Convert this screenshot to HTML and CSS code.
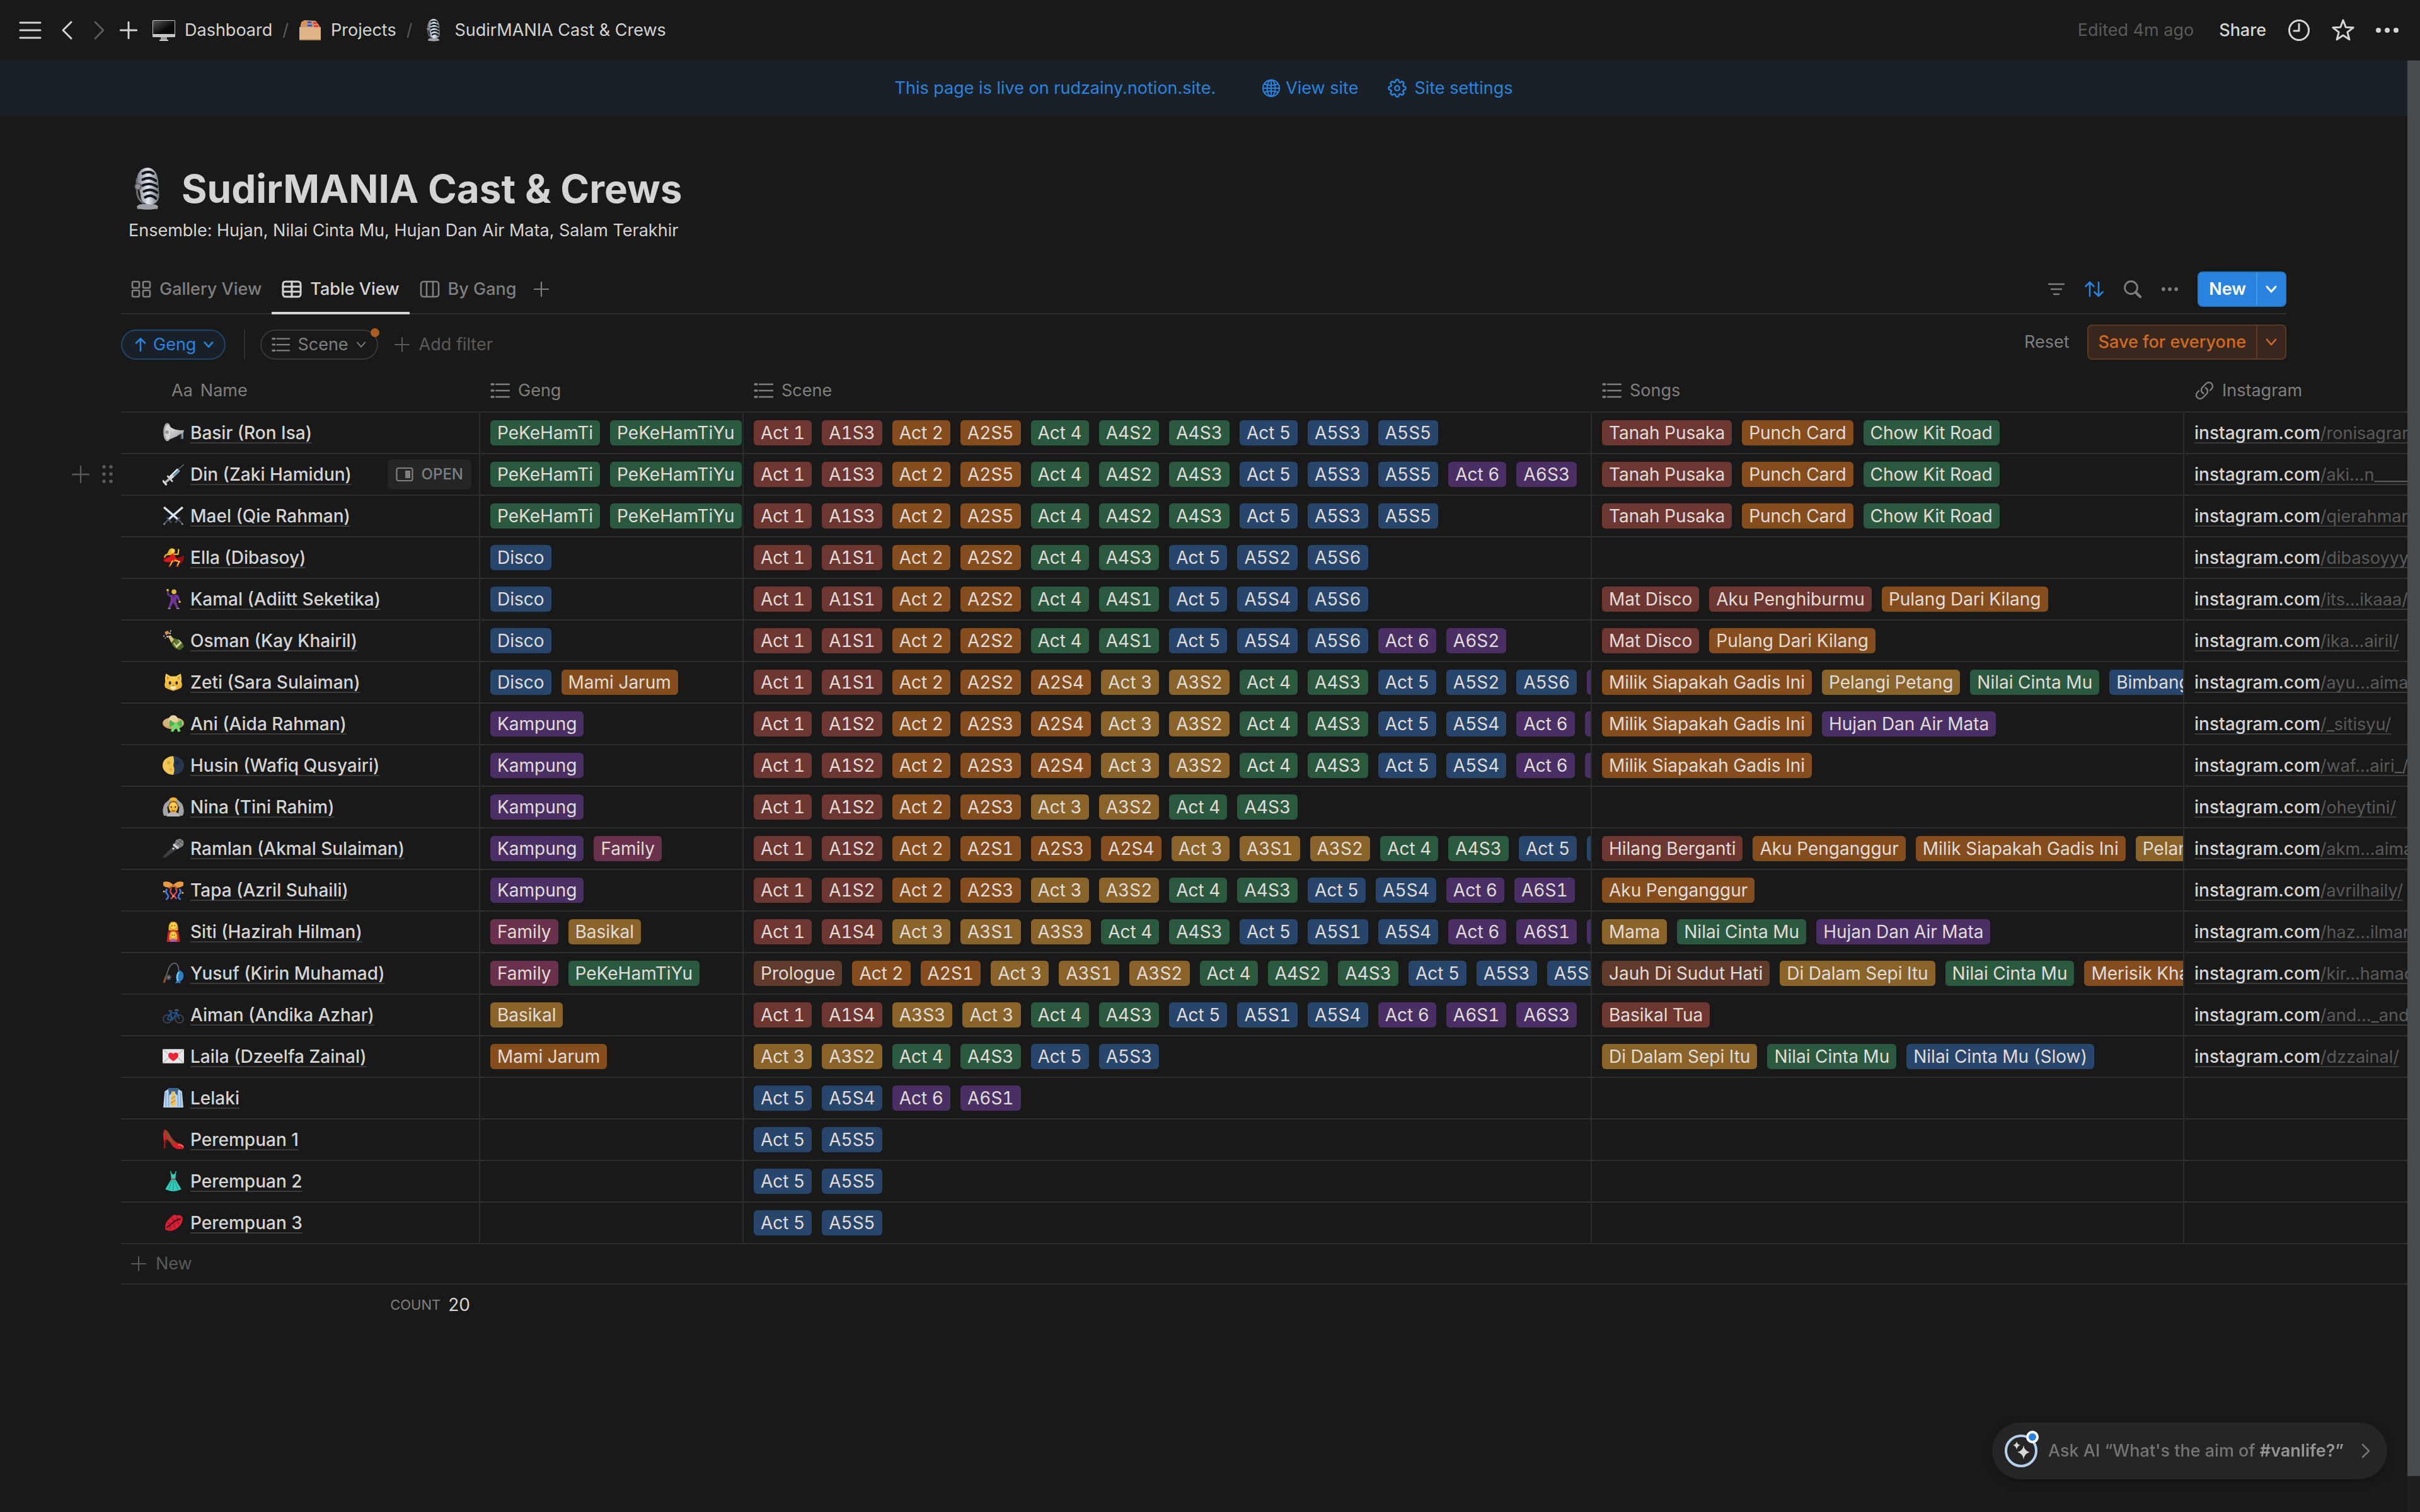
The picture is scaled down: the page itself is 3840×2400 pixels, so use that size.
FILE: index.html
```html
<!DOCTYPE html>
<html lang="en">
<head>
<meta charset="utf-8">
<title>SudirMANIA Cast &amp; Crews</title>
<link rel="stylesheet" href="styles.css">
</head>
<body>
<svg class="sprite" aria-hidden="true">
  <defs>
    <linearGradient id="steel" x1="0" x2="1"><stop offset="0" stop-color="#777b80"/><stop offset=".5" stop-color="#dfe9f5"/><stop offset="1" stop-color="#6a6a6c"/></linearGradient>
    <linearGradient id="silver" x1="0" x2="1" y1="0" y2="1"><stop offset="0" stop-color="#fff"/><stop offset="1" stop-color="#8d9094"/></linearGradient>
    <linearGradient id="screen" x1="0" x2="1" y1="0" y2="1"><stop offset="0" stop-color="#565656"/><stop offset=".6" stop-color="#0a0a0a"/></linearGradient>
    <linearGradient id="gold" x1="0" x2="0" y1="0" y2="1"><stop offset="0" stop-color="#ffd95e"/><stop offset="1" stop-color="#e8a72a"/></linearGradient>
    <symbol id="i-plus" viewBox="0 0 24 24"><path d="M12 1v22M1 12h22"/></symbol>
    <symbol id="i-down" viewBox="0 0 20 20"><path d="M3 6l7 8 7-8"/></symbol>
    <symbol id="i-list" viewBox="0 0 32 32"><path d="M9 6h21M9 16h21M9 26h21"/><path d="M2 6h3M2 16h3M2 26h3" stroke-width="3.4"/></symbol>
    <symbol id="i-dots" viewBox="0 0 36 36"><g fill="currentColor" stroke="none"><circle cx="4" cy="18" r="4"/><circle cx="18" cy="18" r="4"/><circle cx="32" cy="18" r="4"/></g></symbol>
    <symbol id="e-mic" viewBox="0 0 32 36"><path d="M9 31h14l2 4H7z" fill="#777b80"/><ellipse cx="16" cy="33" rx="9" ry="2.500" fill="#9da1a5"/><path d="M7 11C7 4 11 0 16 0s8 4 9 10l1 13c0 5-3 8-8 8-6 0-8-4-8-9z" fill="url(#steel)"/><path d="M12 5q5-3 9 0M12 10q6-3 11 1M12 15q6-3 12 1M13 20q6-3 11 1M14 25q5-3 9 1" fill="none" stroke="#15161a" stroke-width="2.200" stroke-linecap="round"/><path d="M7 9v9q0 9 6 12" fill="none" stroke="#6d6f73" stroke-width="1.600"/><circle cx="8" cy="16" r="2.600" fill="#8d9094" stroke="#55575a"/></symbol>
    <symbol id="e-monitor" viewBox="0 0 36 36"><path d="M13 27h10v7H13z" fill="#9a9a9c"/><path d="M11 33h14v2H11z" fill="#c9c9cb"/><rect x="0" y="2" width="36" height="27" rx="1.500" fill="#c5c5c8"/><rect x="1" y="3" width="34" height="21" fill="url(#screen)"/></symbol>
    <symbol id="e-folder" viewBox="0 0 36 36"><path d="M4 5l5-3 18 1 6 8v4H2z" fill="#c9986a"/><path d="M6 4h5v4H6z" fill="#f08c3a"/><path d="M14 4h6v3h-6zM14 9h7v3h-7z" fill="#3556d8"/><path d="M23 5h6v3h-6zM24 10h7v3h-7z" fill="#ef3b3b"/><path d="M1 13h34v21H1z" fill="#dfb588"/><path d="M1 32h34v2H1z" fill="#b98b5d"/></symbol>
    <symbol id="e-horn" viewBox="0 0 32 32"><path d="M26 13h5v12h-5z" fill="#7f97ac"/><path d="M25 17l3-1v9h-3z" fill="#22272c"/><path d="M6 2C12 9 20 13 32 12l-1 4c-5 2-7 3-9 5l-14 6C3 30 1 8 6 2z" fill="url(#silver)"/><ellipse cx="7" cy="15" rx="6" ry="13.500" fill="#a7a9ac"/><ellipse cx="8" cy="15" rx="4.500" ry="11" fill="#d4d5d7"/><circle cx="6.500" cy="15" r="2.600" fill="#909295"/></symbol>
    <symbol id="e-syringe" viewBox="0 0 32 32"><path d="M23 9l9-8" stroke="#6f7478" stroke-width="1.300"/><path d="M8 21L22 7l4 4-14 14z" fill="#c9d6dd"/><path d="M15 17l8-8 2 2-8 8z" fill="#5f93b4"/><path d="M9 21L22 8" stroke="#f4f8fa" stroke-width="1.400"/><path d="M7 18l8 9" stroke="#d5d8da" stroke-width="2.400"/><path d="M10 23l-6 5" stroke="#b5b8ba" stroke-width="3.400"/><path d="M0 25l6 7" stroke="#dadcdd" stroke-width="3"/></symbol>
    <symbol id="e-swords" viewBox="0 0 32 32"><path d="M2 3l21 18M30 3L9 21" stroke="#b8c9d8" stroke-width="3.400" fill="none"/><path d="M2 3l20 17M30 3L10 20" stroke="#f3f7fa" stroke-width="1.200" fill="none"/><path d="M6 18l7 8M26 18l-7 8M9 21l-6 6M23 21l6 6" stroke="#565c70" stroke-width="2" fill="none"/><circle cx="2.500" cy="28" r="1.500" fill="#8a8f9f"/><circle cx="29.500" cy="28" r="1.500" fill="#8a8f9f"/></symbol>
    <symbol id="e-dancer" viewBox="0 0 32 32"><path d="M14 14q5 0 8 3l10-4q1 7-4 12-6-1-10-4-6 5-11 1-4 1-6-1 0-5 2-6 6 1 11-1z" fill="#8f0f16"/><path d="M11 9l7-1 1 7 4 5-6 3-8-1q-4 2-7-1 4-5 9-6z" fill="#d8191f"/><path d="M10 4Q14 0 18 4l-2 6q-3 2-5 0l-5 1q2-2 4-7z" fill="#e9b02d"/><circle cx="15.500" cy="6" r="3" fill="#ffd34b"/><path d="M17 11h6l1-7M12 11l-7 1-2 3M15 21l-4 7M18 20l7 2-3 6" stroke="#f4c22f" stroke-width="2" fill="none" stroke-linecap="round"/><path d="M12 29h-3M24 29h-4" stroke="#c81a20" stroke-width="2"/></symbol>
    <symbol id="e-discoman" viewBox="0 0 32 32"><path d="M8 3v6l5 3" stroke="#6a3290" stroke-width="2.600" fill="none"/><path d="M12 10l9-1 3 2 2 7-2 1-3-5-1 5 4 11h-3l-5-9-5 9H8l4-12z" fill="#6f3598"/><path d="M15 10h3l-1 5z" fill="#47206a"/><circle cx="17" cy="5" r="3.600" fill="#e9b93a"/><circle cx="7.500" cy="2.500" r="1.700" fill="#f4c22f"/><circle cx="25.500" cy="20" r="1.600" fill="#f4c22f"/><path d="M8 30h4M21 30h4" stroke="#c9a9dc" stroke-width="1.400"/></symbol>
    <symbol id="e-champagne" viewBox="0 0 32 32"><path d="M10 10l5 1 8 3c5 3 8 7 9 11l-6 5c-6-1-10-4-12-9z" fill="#4c6b26"/><path d="M8 9l4-1 5 6-4 5z" fill="#d9bf83"/><path d="M16 20l8-6 5 5-8 8z" fill="#d8cf9b"/><path d="M17 18l5-4 4 4-6 5z" fill="#5c7d2c"/><path d="M3 3l5-2 2 4-5 3z" fill="#d58a58"/><g fill="#e8e8dc"><circle cx="2" cy="9" r="1"/><circle cx="7" cy="10" r="1.200"/><circle cx="11" cy="5" r="1.200"/><circle cx="12" cy="1.500" r="1"/><circle cx="4" cy="12" r=".8"/></g></symbol>
    <symbol id="e-cat" viewBox="0 0 32 32"><path d="M5 3l7 4h8l7-4q2 6 1 12 2 5 0 9-5 3-12 5-7-2-12-5-2-4 0-9-1-6 1-12z" fill="url(#gold)"/><path d="M6 6l4 3-3 4zM26 6l-4 3 3 4z" fill="#d1902f"/><path d="M11 24q5-6 10 0-5 6-10 0z" fill="#fce9b5"/><ellipse cx="11" cy="17" rx="1.800" ry="2.600" fill="#2c2a22"/><ellipse cx="21" cy="17" rx="1.800" ry="2.600" fill="#2c2a22"/><path d="M14.500 20.500h3L16 22.500z" fill="#8f6238"/></symbol>
    <symbol id="e-hat" viewBox="0 0 32 32"><ellipse cx="16" cy="15" rx="16" ry="9" fill="#c79f66"/><ellipse cx="16" cy="14" rx="15" ry="7.500" fill="#d6b27c"/><path d="M9 12q0-9 7-9t7 9q-7 4-14 0z" fill="#ecd2a0"/><path d="M20 16l-9-6q-2 6 0 11zM20 16l8-6q2 6 0 11z" fill="#46b84c"/><path d="M18 15h4l5 12-4 1-3-7-4 7-4-1z" fill="#6fdc6b"/></symbol>
    <symbol id="e-moon" viewBox="0 0 32 32"><ellipse cx="16" cy="16" rx="16" ry="14" fill="#26364d"/><path d="M16 2a16 14 0 0 0 0 28q3-7 0-14 2-7 0-14z" fill="#f2c653"/><circle cx="9" cy="12" r="2.600" fill="#d9a93a"/><circle cx="12" cy="22" r="2" fill="#d9a93a"/><circle cx="22" cy="12" r="3" fill="#1d2b40"/></symbol>
    <symbol id="e-nina" viewBox="0 0 32 32"><path d="M13 2L3 11q-5 10-1 18h7l-2-13 8-9zM19 2l10 9q5 10 1 18h-7l2-13-8-9z" fill="#a2a4a8"/><path d="M6 30q2-7 10-7t10 7z" fill="#b5b7bb"/><path d="M10 4q6-5 12 0l-3 3h-6z" fill="#f0b42f"/><ellipse cx="16" cy="15" rx="7.500" ry="8.500" fill="#9a641f"/><ellipse cx="16" cy="17" rx="6.500" ry="8" fill="url(#gold)"/><circle cx="13" cy="16" r="1.200" fill="#4a3212"/><circle cx="19" cy="16" r="1.200" fill="#4a3212"/><path d="M13.500 21q2.500 2 5 0" stroke="#a3541e" stroke-width="1.400" fill="none"/></symbol>
    <symbol id="e-microphone" viewBox="0 0 32 32"><path d="M17 11l6 5L5 29q-5 2-4-2z" fill="#3c3d40"/><circle cx="25" cy="8" r="6.500" fill="#8b8d91"/><path d="M19 5l10 8M22 2l9 7M20 12l9-9" stroke="#56585c" stroke-width="1.300"/><path d="M17 8l8 7-3 2-7-6z" fill="#cfd1d4"/><circle cx="16" cy="16" r="1.500" fill="#e3e4e6"/></symbol>
    <symbol id="e-confetti" viewBox="0 0 32 32"><path d="M1 4q8-3 15 4v3Q6 14 1 9zM31 4q-8-3-15 4v3q10 3 15-2z" fill="#e99a42"/><path d="M16 9L9 13M16 9l7 4" stroke="#c56d23" stroke-width="2"/><path d="M7 14q-4 4 0 8t-2 8M25 14q4 4 0 8t2 8" stroke="#3c7ae0" stroke-width="2.600" fill="none"/><path d="M13 13q-3 6 1 9t-2 7M19 13q4 5 0 8t2 8" stroke="#e0486a" stroke-width="2.200" fill="none"/><g fill="#f4c04a"><circle cx="2" cy="18" r="1.300"/><circle cx="30" cy="20" r="1.300"/><circle cx="16" cy="25" r="1.300"/></g></symbol>
    <symbol id="e-mother" viewBox="0 0 32 32"><path d="M9 14Q8 1 16 1t7 13z" fill="#e6a92d"/><circle cx="16" cy="7" r="4.600" fill="#ffd34b"/><path d="M6 31l2-15q8-5 16 0l2 15z" fill="#ce2327"/><path d="M10 28q-1-13 6-13t6 13z" fill="#e6a92d"/><circle cx="16" cy="21" r="4.300" fill="#ffd34b"/><path d="M10 31q6-9 12 0z" fill="#b554c9"/><circle cx="14" cy="7" r=".8" fill="#5b3a10"/><circle cx="18" cy="7" r=".8" fill="#5b3a10"/><circle cx="14.500" cy="21" r=".8" fill="#5b3a10"/><circle cx="17.500" cy="21" r=".8" fill="#5b3a10"/></symbol>
    <symbol id="e-fishing" viewBox="0 0 32 32"><path d="M2 30L9 9q4-9 10-8 5 1 5 11" fill="none" stroke="#626870" stroke-width="1.700"/><path d="M2 30l3-9" stroke="#8c5230" stroke-width="3"/><circle cx="9" cy="22" r="4" fill="#484d55"/><circle cx="9" cy="22" r="1.600" fill="#8d9299"/><path d="M25 11q8 4 6 11-1 4-5 6l1 3-4-1-4 1 2-4q-3-8 4-16z" fill="#2e7fc2"/><path d="M24 14q-4 7-1 13" stroke="#8fd0ef" stroke-width="2" fill="none"/></symbol>
    <symbol id="e-bike" viewBox="0 0 32 32"><g fill="none" stroke="#3d4650" stroke-width="1.800"><circle cx="7" cy="22" r="6"/><circle cx="25" cy="22" r="6"/></g><path d="M7 22l5-9h9l-6 10-4-11M15 23H7M25 22l-5-12" stroke="#1f5596" stroke-width="1.900" fill="none"/><path d="M9 10h5M18 9l4-1 2 2" stroke="#596068" stroke-width="1.700" fill="none"/></symbol>
    <symbol id="e-letter" viewBox="0 0 32 32"><rect x="0" y="5" width="32" height="21" rx="1" fill="#e7e7e9"/><path d="M1 25l12-11M31 25L19 14M1 6l15 12L31 6" stroke="#b3b4b8" stroke-width="1.200" fill="none"/><path d="M16 23C8 18 8 15 9 12q3-4 7 0 4-4 7 0c1 3 1 6-7 11z" fill="#e82635"/></symbol>
    <symbol id="e-shirt" viewBox="0 0 32 32"><path d="M9 2h14l6 4 2 24H1L3 6z" fill="#bcd5ef"/><path d="M5 7v22M9 9v20M23 9v20M27 7v22" stroke="#7ea9d6" stroke-width="1.500"/><path d="M8 1h16l-2 11-6-6-6 6z" fill="#3a6492"/><path d="M13 6h6l-1 5 2 14-4 5-4-5 2-14z" fill="#efc35c"/><path d="M13 17l6-4M12 24l7-5" stroke="#c68f2e" stroke-width="1.500"/></symbol>
    <symbol id="e-shoe" viewBox="0 0 32 32"><path d="M3 1q4 0 7 7 4 8 12 13 9 1 10 6 0 4-9 3-7-1-12-10l-5-5-2 14H2Q3 21 1 13 0 5 3 1z" fill="#d42026"/><path d="M4 2q5 2 7 7t9 12l-4 2Q8 15 3 7z" fill="#8a4a2c"/><path d="M4 16v13" stroke="#5d1414" stroke-width="1.600"/><path d="M23 24q5-1 8 3" stroke="#ff7b74" stroke-width="1.400" fill="none"/></symbol>
    <symbol id="e-dress" viewBox="0 0 32 32"><path d="M12 1l1 4 3 2 3-2 1-4" fill="none" stroke="#2cb7a4" stroke-width="1.600"/><path d="M12 4l4 3 4-3-1 9 9 15q-12 6-24 0l9-15z" fill="#36cdb8"/><path d="M13 12h6v2h-6z" fill="#b23c52"/><path d="M14 15L9 29M18 15l5 14M16 15v15" stroke="#1fa392" stroke-width="1.300"/></symbol>
    <symbol id="e-lips" viewBox="0 0 32 32"><path d="M4 26Q2 16 12 8q5-6 9-3 7-2 9 4 0 9-7 14-10 8-19 3z" fill="#d81f33"/><path d="M6 23q5-3 9-7t12-6" stroke="#46101a" stroke-width="2.200" fill="none"/><path d="M8 15l4 4M14 9l3 5M21 7l1 4M11 26l1-5M18 23l-1-6M25 18l-3-4" stroke="#8d1220" stroke-width="1.200"/></symbol>
  </defs>
</svg>

<header class="topbar">
  <div class="topnav">
    <button type="button" aria-label="Menu"><svg class="ico" width="36" height="36" viewBox="0 0 36 36" stroke-width="3"><path d="M2 6h32M2 18h32M2 30h32"/></svg></button>
    <button type="button" aria-label="Back"><svg class="ico" width="20" height="32" viewBox="0 0 20 32" stroke-width="3"><path d="M17 3L4 16l13 13"/></svg></button>
    <button type="button" aria-label="Forward" class="dim"><svg class="ico" width="20" height="32" viewBox="0 0 20 32" stroke-width="3"><path d="M3 3l13 13L3 29"/></svg></button>
    <button type="button" aria-label="New page"><svg class="ico" width="28" height="28" stroke-width="2.500"><use href="#i-plus"/></svg></button>
  </div>
  <nav class="crumbs" aria-label="Breadcrumb">
    <a href="#"><svg width="36" height="36"><use href="#e-monitor"/></svg>Dashboard</a>
    <span class="slash">/</span>
    <a href="#"><svg width="36" height="36"><use href="#e-folder"/></svg>Projects</a>
    <span class="slash">/</span>
    <a href="#"><svg width="36" height="36"><use href="#e-mic"/></svg>SudirMANIA Cast &amp; Crews</a>
  </nav>
  <div class="topactions">
    <span class="edited">Edited 4m ago</span>
    <button type="button" class="share">Share</button>
    <button type="button" aria-label="Updates"><svg class="ico" width="36" height="36" viewBox="0 0 36 36" stroke-width="3"><circle cx="18" cy="18" r="15.500"/><path d="M18 8v11h-8"/></svg></button>
    <button type="button" aria-label="Favorite"><svg class="ico" width="36" height="36" viewBox="0 0 36 36" stroke-width="3"><path d="M18 2l4.200 11.200 12 .5-9.400 7.400 3.200 11.700L18 26.100 8 32.800l3.200-11.700L1.800 13.700l12-.5z"/></svg></button>
    <button type="button" aria-label="More"><svg class="ico" width="36" height="36"><use href="#i-dots"/></svg></button>
  </div>
</header>

<div class="frame">
<main class="page">
  <div class="banner">
    <span class="live">This page is live on rudzainy.notion.site.</span>
    <a href="#"><svg class="ico" width="28" height="28" viewBox="0 0 28 28" stroke-width="2"><circle cx="14" cy="14" r="13"/><ellipse cx="14" cy="14" rx="6.500" ry="13"/><path d="M14 1v26M1 14h26M3.500 7.500q10.500 4 21 0M3.500 20.500q10.500-4 21 0"/></svg>View site</a>
    <a href="#"><svg class="ico" width="36" height="36" viewBox="0 0 24 24" stroke-width="1.600"><path d="M10.343 3.940c.09-.542.56-.94 1.110-.94h1.093c.55 0 1.020.398 1.110.94l.149.894c.07.424.384.764.78.93.398.164.855.142 1.205-.108l.737-.527a1.125 1.125 0 0 1 1.450.12l.773.774c.39.389.44 1.002.12 1.450l-.527.737c-.25.35-.272.806-.107 1.204.165.397.505.71.93.78l.893.15c.543.09.94.559.94 1.109v1.094c0 .55-.397 1.020-.94 1.110l-.894.149c-.424.07-.764.383-.929.78-.165.398-.143.854.107 1.204l.527.738c.32.447.269 1.060-.12 1.450l-.774.773a1.125 1.125 0 0 1-1.449.12l-.738-.527c-.35-.25-.806-.272-1.203-.107-.398.165-.71.505-.781.929l-.149.894c-.09.542-.56.94-1.110.94h-1.094c-.55 0-1.019-.398-1.110-.94l-.148-.894c-.071-.424-.384-.764-.781-.93-.398-.164-.854-.142-1.204.108l-.738.527c-.447.32-1.060.269-1.450-.12l-.773-.774a1.125 1.125 0 0 1-.12-1.450l.527-.737c.25-.35.272-.806.108-1.204-.165-.397-.506-.71-.93-.78l-.894-.15c-.542-.09-.94-.56-.94-1.109v-1.094c0-.55.398-1.020.94-1.110l.894-.149c.424-.07.765-.383.93-.78.165-.398.143-.854-.108-1.204l-.526-.738a1.125 1.125 0 0 1 .12-1.450l.773-.773a1.125 1.125 0 0 1 1.450-.12l.737.527c.35.25.807.272 1.204.107.397-.165.71-.505.78-.929z"/><circle cx="12" cy="12" r="2.500"/></svg>Site settings</a>
  </div>

  <div class="heading">
    <h1><svg width="60" height="74"><use href="#e-mic"/></svg>SudirMANIA Cast &amp; Crews</h1>
    <p>Ensemble: Hujan, Nilai Cinta Mu, Hujan Dan Air Mata, Salam Terakhir</p>
  </div>

  <div class="viewbar">
    <nav class="tabs" aria-label="Views">
      <a href="#"><svg class="ico" width="32" height="32" viewBox="0 0 32 32" stroke-width="2.600"><rect x="2" y="4" width="11" height="10" rx="2"/><rect x="19" y="4" width="11" height="10" rx="2"/><rect x="2" y="18" width="11" height="10" rx="2"/><rect x="19" y="18" width="11" height="10" rx="2"/></svg>Gallery View</a>
      <a href="#" class="active" aria-current="page"><svg class="ico" width="32" height="32" viewBox="0 0 32 32" stroke-width="3"><rect x="2" y="4" width="28" height="24" rx="4"/><path d="M2 12h28M2 20h28M16 4v24"/></svg>Table View</a>
      <a href="#"><svg class="ico" width="32" height="32" viewBox="0 0 32 32" stroke-width="2.600"><rect x="2" y="4" width="28" height="24" rx="4"/><path d="M11 4v24M21 4v24"/></svg>By Gang</a>
      <button type="button" aria-label="Add view"><svg class="ico" width="24" height="24" stroke-width="2.200"><use href="#i-plus"/></svg></button>
    </nav>
    <div class="tools">
      <button type="button" aria-label="Filter"><svg class="ico" width="28" height="28" viewBox="0 0 28 28" stroke-width="2.600"><path d="M2 6h24M6 14h16M10 22h8"/></svg></button>
      <button type="button" aria-label="Sort" class="blue"><svg class="ico" width="30" height="28" viewBox="0 0 30 28" stroke-width="2.600"><path d="M8 25V3M1.500 9.500L8 3l6.500 6.500M22 3v22M15.500 18.500L22 25l6.500-6.500"/></svg></button>
      <button type="button" aria-label="Search"><svg class="ico" width="30" height="30" viewBox="0 0 30 30" stroke-width="2.800"><circle cx="12.500" cy="12.500" r="10"/><path d="M20 20l7 7" stroke-width="4.500"/></svg></button>
      <button type="button" aria-label="More options"><svg class="ico" width="26" height="26"><use href="#i-dots"/></svg></button>
      <div class="split primary">
        <button type="button">New</button>
        <button type="button" aria-label="New options"><svg class="ico" width="20" height="20" stroke-width="3"><use href="#i-down"/></svg></button>
      </div>
    </div>
  </div>

  <div class="filterbar">
    <div class="filters">
      <button type="button" class="pill sort"><svg class="ico" width="18" height="24" viewBox="0 0 18 24" stroke-width="2.600"><path d="M9 22V3M2 9.500L9 2.500l7 7"/></svg>Geng<svg class="ico" width="18" height="18" stroke-width="3"><use href="#i-down"/></svg></button>
      <span class="rule"></span>
      <button type="button" class="pill"><svg class="ico" width="30" height="30" stroke-width="2.400"><use href="#i-list"/></svg>Scene<svg class="ico" width="18" height="18" stroke-width="2"><use href="#i-down"/></svg><span class="changed"></span></button>
      <button type="button" class="add"><svg class="ico" width="24" height="24" stroke-width="2"><use href="#i-plus"/></svg>Add filter</button>
    </div>
    <div class="saving">
      <button type="button" class="reset">Reset</button>
      <div class="split warn">
        <button type="button">Save for everyone</button>
        <button type="button" aria-label="Save options"><svg class="ico" width="20" height="20" stroke-width="2.600"><use href="#i-down"/></svg></button>
      </div>
    </div>
  </div>

  <table class="cast">
    <colgroup><col class="c-name"><col class="c-geng"><col class="c-scene"><col class="c-songs"><col></colgroup>
    <thead>
      <tr>
        <th scope="col"><div class="head first"><span class="aa">Aa</span>Name</div></th>
        <th scope="col"><div class="head"><svg class="ico" width="32" height="32" stroke-width="2.400"><use href="#i-list"/></svg>Geng</div></th>
        <th scope="col"><div class="head"><svg class="ico" width="32" height="32" stroke-width="2.400"><use href="#i-list"/></svg>Scene</div></th>
        <th scope="col"><div class="head"><svg class="ico" width="32" height="32" stroke-width="2.400"><use href="#i-list"/></svg>Songs</div></th>
        <th scope="col"><div class="head"><svg class="ico" width="32" height="32" viewBox="0 0 24 24" stroke-width="1.800"><path d="M13.190 8.688a4.500 4.500 0 0 1 1.242 7.244l-4.500 4.500a4.500 4.500 0 0 1-6.364-6.364l1.757-1.757m13.350-.622 1.757-1.757a4.500 4.500 0 0 0-6.364-6.364l-4.500 4.500a4.500 4.500 0 0 0 1.242 7.244"/></svg>Instagram</div></th>
      </tr>
    </thead>
    <tbody>
      <tr>
        <td><div class="who"><svg><use href="#e-horn"/></svg><a href="#">Basir (Ron Isa)</a></div></td>
        <td><div class="tags"><span class="green">PeKeHamTi</span><span class="green">PeKeHamTiYu</span></div></td>
        <td><div class="tags"><span class="red">Act 1</span><span class="red">A1S3</span><span class="orange">Act 2</span><span class="orange">A2S5</span><span class="green">Act 4</span><span class="green">A4S2</span><span class="green">A4S3</span><span class="blue">Act 5</span><span class="blue">A5S3</span><span class="blue">A5S5</span></div></td>
        <td><div class="tags"><span class="red">Tanah Pusaka</span><span class="orange">Punch Card</span><span class="green">Chow Kit Road</span></div></td>
        <td><div class="insta"><a href="#">instagram.com<i>/ronisagram/</i></a></div></td>
      </tr>
      <tr>
        <td class="hovered">
          <div class="handles"><button type="button" aria-label="Add row"><svg class="ico" width="28" height="28" stroke-width="2"><use href="#i-plus"/></svg></button><button type="button" aria-label="Drag row"><svg width="18" height="30" viewBox="0 0 18 30" fill="currentColor"><circle cx="3" cy="3" r="2.800"/><circle cx="14" cy="3" r="2.800"/><circle cx="3" cy="14.500" r="2.800"/><circle cx="14" cy="14.500" r="2.800"/><circle cx="3" cy="26" r="2.800"/><circle cx="14" cy="26" r="2.800"/></svg></button></div>
          <div class="who"><svg><use href="#e-syringe"/></svg><a href="#">Din (Zaki Hamidun)</a><button type="button" class="open"><svg class="ico" width="28" height="24" viewBox="0 0 28 24" stroke-width="2.200"><rect x="1.500" y="2" width="25" height="20" rx="2.500"/><path d="M15 6h8v12h-8z" fill="currentColor" stroke="none"/></svg>OPEN</button></div></td>
        <td><div class="tags"><span class="green">PeKeHamTi</span><span class="green">PeKeHamTiYu</span></div></td>
        <td><div class="tags"><span class="red">Act 1</span><span class="red">A1S3</span><span class="orange">Act 2</span><span class="orange">A2S5</span><span class="green">Act 4</span><span class="green">A4S2</span><span class="green">A4S3</span><span class="blue">Act 5</span><span class="blue">A5S3</span><span class="blue">A5S5</span><span class="purple">Act 6</span><span class="purple">A6S3</span></div></td>
        <td><div class="tags"><span class="red">Tanah Pusaka</span><span class="orange">Punch Card</span><span class="green">Chow Kit Road</span></div></td>
        <td><div class="insta"><a href="#">instagram.com<i>/aki...n_____/</i></a></div></td>
      </tr>
      <tr>
        <td><div class="who"><svg><use href="#e-swords"/></svg><a href="#">Mael (Qie Rahman)</a></div></td>
        <td><div class="tags"><span class="green">PeKeHamTi</span><span class="green">PeKeHamTiYu</span></div></td>
        <td><div class="tags"><span class="red">Act 1</span><span class="red">A1S3</span><span class="orange">Act 2</span><span class="orange">A2S5</span><span class="green">Act 4</span><span class="green">A4S2</span><span class="green">A4S3</span><span class="blue">Act 5</span><span class="blue">A5S3</span><span class="blue">A5S5</span></div></td>
        <td><div class="tags"><span class="red">Tanah Pusaka</span><span class="orange">Punch Card</span><span class="green">Chow Kit Road</span></div></td>
        <td><div class="insta"><a href="#">instagram.com<i>/qierahman/</i></a></div></td>
      </tr>
      <tr>
        <td><div class="who"><svg><use href="#e-dancer"/></svg><a href="#">Ella (Dibasoy)</a></div></td>
        <td><div class="tags"><span class="blue">Disco</span></div></td>
        <td><div class="tags"><span class="red">Act 1</span><span class="red">A1S1</span><span class="orange">Act 2</span><span class="orange">A2S2</span><span class="green">Act 4</span><span class="green">A4S3</span><span class="blue">Act 5</span><span class="blue">A5S2</span><span class="blue">A5S6</span></div></td>
        <td></td>
        <td><div class="insta"><a href="#">instagram.com<i>/dibasoyyy/</i></a></div></td>
      </tr>
      <tr>
        <td><div class="who"><svg><use href="#e-discoman"/></svg><a href="#">Kamal (Adiitt Seketika)</a></div></td>
        <td><div class="tags"><span class="blue">Disco</span></div></td>
        <td><div class="tags"><span class="red">Act 1</span><span class="red">A1S1</span><span class="orange">Act 2</span><span class="orange">A2S2</span><span class="green">Act 4</span><span class="green">A4S1</span><span class="blue">Act 5</span><span class="blue">A5S4</span><span class="blue">A5S6</span></div></td>
        <td><div class="tags"><span class="red">Mat Disco</span><span class="red">Aku Penghiburmu</span><span class="orange">Pulang Dari Kilang</span></div></td>
        <td><div class="insta"><a href="#">instagram.com<i>/its...ikaaa/</i></a></div></td>
      </tr>
      <tr>
        <td><div class="who"><svg><use href="#e-champagne"/></svg><a href="#">Osman (Kay Khairil)</a></div></td>
        <td><div class="tags"><span class="blue">Disco</span></div></td>
        <td><div class="tags"><span class="red">Act 1</span><span class="red">A1S1</span><span class="orange">Act 2</span><span class="orange">A2S2</span><span class="green">Act 4</span><span class="green">A4S1</span><span class="blue">Act 5</span><span class="blue">A5S4</span><span class="blue">A5S6</span><span class="purple">Act 6</span><span class="purple">A6S2</span></div></td>
        <td><div class="tags"><span class="red">Mat Disco</span><span class="orange">Pulang Dari Kilang</span></div></td>
        <td><div class="insta"><a href="#">instagram.com<i>/ika...airil/</i></a></div></td>
      </tr>
      <tr>
        <td><div class="who"><svg><use href="#e-cat"/></svg><a href="#">Zeti (Sara Sulaiman)</a></div></td>
        <td><div class="tags"><span class="blue">Disco</span><span class="orange">Mami Jarum</span></div></td>
        <td><div class="tags"><span class="red">Act 1</span><span class="red">A1S1</span><span class="orange">Act 2</span><span class="orange">A2S2</span><span class="orange">A2S4</span><span class="yellow">Act 3</span><span class="yellow">A3S2</span><span class="green">Act 4</span><span class="green">A4S3</span><span class="blue">Act 5</span><span class="blue">A5S2</span><span class="blue">A5S6</span><span class="purple">Act 6</span></div></td>
        <td><div class="tags"><span class="orange">Milik Siapakah Gadis Ini</span><span class="yellow">Pelangi Petang</span><span class="green">Nilai Cinta Mu</span><span class="blue">Bimbang</span></div></td>
        <td><div class="insta"><a href="#">instagram.com<i>/ayu...aiman/</i></a></div></td>
      </tr>
      <tr>
        <td><div class="who"><svg><use href="#e-hat"/></svg><a href="#">Ani (Aida Rahman)</a></div></td>
        <td><div class="tags"><span class="purple">Kampung</span></div></td>
        <td><div class="tags"><span class="red">Act 1</span><span class="red">A1S2</span><span class="orange">Act 2</span><span class="orange">A2S3</span><span class="orange">A2S4</span><span class="yellow">Act 3</span><span class="yellow">A3S2</span><span class="green">Act 4</span><span class="green">A4S3</span><span class="blue">Act 5</span><span class="blue">A5S4</span><span class="purple">Act 6</span><span class="purple">A6S1</span></div></td>
        <td><div class="tags"><span class="orange">Milik Siapakah Gadis Ini</span><span class="purple">Hujan Dan Air Mata</span></div></td>
        <td><div class="insta"><a href="#">instagram.com<i>/_sitisyu/</i></a></div></td>
      </tr>
      <tr>
        <td><div class="who"><svg><use href="#e-moon"/></svg><a href="#">Husin (Wafiq Qusyairi)</a></div></td>
        <td><div class="tags"><span class="purple">Kampung</span></div></td>
        <td><div class="tags"><span class="red">Act 1</span><span class="red">A1S2</span><span class="orange">Act 2</span><span class="orange">A2S3</span><span class="orange">A2S4</span><span class="yellow">Act 3</span><span class="yellow">A3S2</span><span class="green">Act 4</span><span class="green">A4S3</span><span class="blue">Act 5</span><span class="blue">A5S4</span><span class="purple">Act 6</span><span class="purple">A6S1</span></div></td>
        <td><div class="tags"><span class="orange">Milik Siapakah Gadis Ini</span></div></td>
        <td><div class="insta"><a href="#">instagram.com<i>/waf...airi_/</i></a></div></td>
      </tr>
      <tr>
        <td><div class="who"><svg><use href="#e-nina"/></svg><a href="#">Nina (Tini Rahim)</a></div></td>
        <td><div class="tags"><span class="purple">Kampung</span></div></td>
        <td><div class="tags"><span class="red">Act 1</span><span class="red">A1S2</span><span class="orange">Act 2</span><span class="orange">A2S3</span><span class="yellow">Act 3</span><span class="yellow">A3S2</span><span class="green">Act 4</span><span class="green">A4S3</span></div></td>
        <td></td>
        <td><div class="insta"><a href="#">instagram.com<i>/oheytini/</i></a></div></td>
      </tr>
      <tr>
        <td><div class="who"><svg><use href="#e-microphone"/></svg><a href="#">Ramlan (Akmal Sulaiman)</a></div></td>
        <td><div class="tags"><span class="purple">Kampung</span><span class="pink">Family</span></div></td>
        <td><div class="tags"><span class="red">Act 1</span><span class="red">A1S2</span><span class="orange">Act 2</span><span class="orange">A2S1</span><span class="orange">A2S3</span><span class="orange">A2S4</span><span class="yellow">Act 3</span><span class="yellow">A3S1</span><span class="yellow">A3S2</span><span class="green">Act 4</span><span class="green">A4S3</span><span class="blue">Act 5</span><span class="blue">A5S4</span></div></td>
        <td><div class="tags"><span class="red">Hilang Berganti</span><span class="orange">Aku Penganggur</span><span class="orange">Milik Siapakah Gadis Ini</span><span class="yellow">Pelangi Petang</span></div></td>
        <td><div class="insta"><a href="#">instagram.com<i>/akm...aiman/</i></a></div></td>
      </tr>
      <tr>
        <td><div class="who"><svg><use href="#e-confetti"/></svg><a href="#">Tapa (Azril Suhaili)</a></div></td>
        <td><div class="tags"><span class="purple">Kampung</span></div></td>
        <td><div class="tags"><span class="red">Act 1</span><span class="red">A1S2</span><span class="orange">Act 2</span><span class="orange">A2S3</span><span class="yellow">Act 3</span><span class="yellow">A3S2</span><span class="green">Act 4</span><span class="green">A4S3</span><span class="blue">Act 5</span><span class="blue">A5S4</span><span class="purple">Act 6</span><span class="purple">A6S1</span></div></td>
        <td><div class="tags"><span class="orange">Aku Penganggur</span></div></td>
        <td><div class="insta"><a href="#">instagram.com<i>/avrilhaily/</i></a></div></td>
      </tr>
      <tr>
        <td><div class="who"><svg><use href="#e-mother"/></svg><a href="#">Siti (Hazirah Hilman)</a></div></td>
        <td><div class="tags"><span class="pink">Family</span><span class="yellow">Basikal</span></div></td>
        <td><div class="tags"><span class="red">Act 1</span><span class="red">A1S4</span><span class="yellow">Act 3</span><span class="yellow">A3S1</span><span class="yellow">A3S3</span><span class="green">Act 4</span><span class="green">A4S3</span><span class="blue">Act 5</span><span class="blue">A5S1</span><span class="blue">A5S4</span><span class="purple">Act 6</span><span class="purple">A6S1</span><span class="purple">A6S3</span></div></td>
        <td><div class="tags"><span class="yellow">Mama</span><span class="green">Nilai Cinta Mu</span><span class="purple">Hujan Dan Air Mata</span></div></td>
        <td><div class="insta"><a href="#">instagram.com<i>/haz...ilman/</i></a></div></td>
      </tr>
      <tr>
        <td><div class="who"><svg><use href="#e-fishing"/></svg><a href="#">Yusuf (Kirin Muhamad)</a></div></td>
        <td><div class="tags"><span class="pink">Family</span><span class="green">PeKeHamTiYu</span></div></td>
        <td><div class="tags"><span class="brown">Prologue</span><span class="orange">Act 2</span><span class="orange">A2S1</span><span class="yellow">Act 3</span><span class="yellow">A3S1</span><span class="yellow">A3S2</span><span class="green">Act 4</span><span class="green">A4S2</span><span class="green">A4S3</span><span class="blue">Act 5</span><span class="blue">A5S3</span><span class="blue">A5S5</span></div></td>
        <td><div class="tags"><span class="brown">Jauh Di Sudut Hati</span><span class="yellow">Di Dalam Sepi Itu</span><span class="green">Nilai Cinta Mu</span><span class="orange">Merisik Khabar</span></div></td>
        <td><div class="insta"><a href="#">instagram.com<i>/kir...hamad/</i></a></div></td>
      </tr>
      <tr>
        <td><div class="who"><svg><use href="#e-bike"/></svg><a href="#">Aiman (Andika Azhar)</a></div></td>
        <td><div class="tags"><span class="yellow">Basikal</span></div></td>
        <td><div class="tags"><span class="red">Act 1</span><span class="red">A1S4</span><span class="yellow">A3S3</span><span class="yellow">Act 3</span><span class="green">Act 4</span><span class="green">A4S3</span><span class="blue">Act 5</span><span class="blue">A5S1</span><span class="blue">A5S4</span><span class="purple">Act 6</span><span class="purple">A6S1</span><span class="purple">A6S3</span></div></td>
        <td><div class="tags"><span class="red">Basikal Tua</span></div></td>
        <td><div class="insta"><a href="#">instagram.com<i>/and..._andy/</i></a></div></td>
      </tr>
      <tr>
        <td><div class="who"><svg><use href="#e-letter"/></svg><a href="#">Laila (Dzeelfa Zainal)</a></div></td>
        <td><div class="tags"><span class="orange">Mami Jarum</span></div></td>
        <td><div class="tags"><span class="yellow">Act 3</span><span class="yellow">A3S2</span><span class="green">Act 4</span><span class="green">A4S3</span><span class="blue">Act 5</span><span class="blue">A5S3</span></div></td>
        <td><div class="tags"><span class="yellow">Di Dalam Sepi Itu</span><span class="green">Nilai Cinta Mu</span><span class="blue">Nilai Cinta Mu (Slow)</span></div></td>
        <td><div class="insta"><a href="#">instagram.com<i>/dzzainal/</i></a></div></td>
      </tr>
      <tr>
        <td><div class="who"><svg><use href="#e-shirt"/></svg><a href="#">Lelaki</a></div></td>
        <td></td>
        <td><div class="tags"><span class="blue">Act 5</span><span class="blue">A5S4</span><span class="purple">Act 6</span><span class="purple">A6S1</span></div></td>
        <td></td>
        <td></td>
      </tr>
      <tr>
        <td><div class="who"><svg><use href="#e-shoe"/></svg><a href="#">Perempuan 1</a></div></td>
        <td></td>
        <td><div class="tags"><span class="blue">Act 5</span><span class="blue">A5S5</span></div></td>
        <td></td>
        <td></td>
      </tr>
      <tr>
        <td><div class="who"><svg><use href="#e-dress"/></svg><a href="#">Perempuan 2</a></div></td>
        <td></td>
        <td><div class="tags"><span class="blue">Act 5</span><span class="blue">A5S5</span></div></td>
        <td></td>
        <td></td>
      </tr>
      <tr>
        <td><div class="who"><svg><use href="#e-lips"/></svg><a href="#">Perempuan 3</a></div></td>
        <td></td>
        <td><div class="tags"><span class="blue">Act 5</span><span class="blue">A5S5</span></div></td>
        <td></td>
        <td></td>
      </tr>
    </tbody>
    <tfoot>
      <tr><td colspan="5" class="newrow"><button type="button"><svg class="ico" width="24" height="24" stroke-width="2"><use href="#i-plus"/></svg>New</button></td></tr>
      <tr><td class="count"><div><span>COUNT</span>20</div></td></tr>
    </tfoot>
  </table>
</main>
<div class="scroll"><div class="thumb"></div></div>
</div>

<button type="button" class="ask">
  <span class="orb"><svg width="30" height="36" viewBox="0 0 30 36" fill="#d8d8d8"><path d="M19 9q1 9 10 11-9 2-10 12Q18 22 9 20q9-2 10-11zM8 3q1 5 6 6-5 1-6 7-1-6-6-7 5-1 6-6z"/></svg><span class="badge"></span></span>
  <span class="asktext">Ask AI “What's the aim of <b>#vanlife?”</b></span>
  <svg class="ico" width="16" height="26" viewBox="0 0 16 26" stroke-width="2.600"><path d="M3 3l10 10L3 23"/></svg>
</button>
</body>
</html>
```
FILE: styles.css
```css
* { box-sizing: border-box; }

:root {
  --bg: #191919;
  --text: #d4d4d4;
  --muted: #7f7f7f;
  --faint: #5a5a5a;
  --line: #2f2f2f;
  --blue: #2a84df;
}

body {
  margin: 0;
  min-height: 100vh;
  display: flex;
  flex-direction: column;
  background: var(--bg);
  color: var(--text);
  font-family: Inter, "Liberation Sans", sans-serif;
  font-size: 27px;
  line-height: 40px;
}

button {
  margin: 0;
  padding: 0;
  border: 0;
  background: none;
  color: inherit;
  font: inherit;
  display: flex;
  align-items: center;
  justify-content: center;
  white-space: nowrap;
}

a { color: inherit; text-decoration: none; }
svg { display: block; flex: none; }
.sprite { position: absolute; width: 0; height: 0; }

.ico {
  fill: none;
  stroke: currentColor;
  stroke-linecap: round;
  stroke-linejoin: round;
}

/* Top bar */
.topbar {
  height: 96px;
  display: flex;
  align-items: center;
  padding: 0 34px 0 18px;
}
.topnav {
  display: grid;
  grid-template-columns: 60px 56px 48px 44px;
  margin-right: 16px;
}
.dim { color: var(--faint); }
.crumbs { display: flex; align-items: center; gap: 16px; }
.crumbs a { display: flex; align-items: center; gap: 15px; }
.slash { color: var(--faint); }
.topactions {
  margin-left: auto;
  display: flex;
  align-items: center;
  gap: 34px;
}
.edited { margin-right: 6px; color: var(--faint); }
.share { font-weight: 500; }

/* Page body with the scroll track beside it */
.frame { flex: 1; display: flex; }
.page { flex: 1; min-width: 0; }
.scroll { width: 20px; background: #1f1f1f; }
.thumb { height: calc(100% - 57px); background: #474c50; }

.banner {
  height: 88px;
  display: flex;
  align-items: center;
  justify-content: center;
  background: #1a2027;
  color: var(--blue);
}
.banner a { display: flex; align-items: center; gap: 9px; }
.live { margin-right: 74px; }
.live + a { margin-right: 44px; }

.heading { padding: 78px 192px 35px 204px; }
h1 {
  margin: 0 0 8px;
  display: flex;
  align-items: center;
  gap: 24px;
  font-size: 62px;
  line-height: 76px;
  font-weight: 700;
}
.heading p { margin: 0; }

/* View tabs */
.viewbar {
  height: 78px;
  margin: 0 192px;
  display: flex;
  justify-content: space-between;
  border-bottom: 2px solid var(--line);
}
.tabs { display: flex; color: var(--muted); font-weight: 500; }
.tabs a {
  position: relative;
  display: flex;
  align-items: center;
  gap: 13px;
  padding: 0 16px;
}
.tabs button { padding: 0 11px; }
.tabs .active { color: var(--text); }
.tabs .active::after {
  content: "";
  position: absolute;
  left: 0;
  right: 0;
  bottom: -2px;
  height: 4px;
  background: var(--text);
}
.tools { display: flex; align-items: center; gap: 31px; color: var(--muted); }
.tools .blue { color: var(--blue); }

.split {
  height: 56px;
  display: flex;
  border: 2px solid;
  border-radius: 8px;
  font-weight: 500;
}
.split button { padding: 0 16px; }
.split button + button { width: 46px; padding: 0; border-left: 2px solid; }
.primary { background: var(--blue); border-color: #2679cd; color: #fff; font-weight: 600; }
.primary button + button { border-color: #4a97e3; }
.warn { background: #38261f; border-color: #5c3a22; color: #cf6c22; }
.warn button + button { border-color: #5c3a22; }

/* Sort and filter pills */
.filterbar {
  margin: 0 192px;
  padding: 16px 0;
  display: flex;
  align-items: flex-end;
  justify-content: space-between;
}
.filters { display: flex; align-items: center; }
.pill {
  position: relative;
  height: 48px;
  padding: 0 16px;
  gap: 11px;
  border: 2px solid #373737;
  border-radius: 24px;
  color: var(--muted);
}
.pill.sort { padding: 0 16px 0 20px; border-color: #1f4468; background: #1a2027; color: var(--blue); }
.rule { width: 2px; height: 48px; margin: 0 24px 0 29px; background: var(--line); }
.changed {
  position: absolute;
  top: -4px;
  right: -4px;
  width: 14px;
  height: 14px;
  border-radius: 50%;
  background: #ab5b24;
}
.add { gap: 15px; margin-left: 26px; color: var(--faint); }
.saving { display: flex; align-items: center; gap: 28px; }
.reset { color: var(--muted); }

/* Cast table */
.cast {
  width: calc(100% - 192px);
  margin-left: 192px;
  table-layout: fixed;
  border-collapse: separate;
  border-spacing: 0;
}
.c-name { width: 570px; }
.c-geng { width: 418px; }
.c-scene { width: 1346px; }
.c-songs { width: 940px; }

th, td {
  height: 66px;
  padding: 0;
  border-bottom: 2px solid var(--line);
  border-right: 2px solid #2b2b2b;
  text-align: left;
  font-weight: 400;
}
th { height: 68px; border-right-color: transparent; }
th:last-child, td:last-child { border-right: 0; }

.head { display: flex; align-items: center; gap: 12px; padding-left: 16px; color: var(--muted); }
.head.first { padding-left: 80px; }

.who { display: flex; align-items: center; gap: 10px; padding: 0 12px 0 66px; font-size: 28px; font-weight: 500; }
.who > svg { width: 34px; height: 36px; }
.who a, .insta a {
  text-decoration: underline #3a3a3a 2px;
  text-underline-offset: 5px;
  text-decoration-skip-ink: none;
}
.hovered { position: relative; }
.handles {
  position: absolute;
  top: 0;
  right: 100%;
  height: 64px;
  margin-right: 12px;
  display: flex;
  align-items: center;
  gap: 20px;
  color: var(--faint);
}
.open {
  height: 48px;
  margin-left: auto;
  padding: 0 13px;
  gap: 13px;
  border-radius: 8px;
  background: #252525;
  color: var(--muted);
  font-size: 24px;
}

.tags { display: flex; gap: 16px; padding-left: 16px; overflow: hidden; font-size: 28px; font-variant-numeric: tabular-nums; }
.tags span {
  flex: none;
  height: 40px;
  padding: 0 11px;
  border-radius: 6px;
  color: #e0dcd8;
  white-space: nowrap;
}
.tags .red { background: #6e3630; }
.tags .orange { background: #854c1d; }
.tags .yellow { background: #89632a; }
.tags .green { background: #2b593f; }
.tags .blue { background: #28456c; }
.tags .purple { background: #492f64; }
.tags .pink { background: #69314c; }
.tags .brown { background: #603b2c; }

.insta { padding-left: 16px; overflow: hidden; white-space: nowrap; font-size: 28px; font-weight: 500; }
.insta i { font-size: 27px; font-style: normal; font-weight: 400; color: var(--faint); }

.newrow { height: 64px; }
.newrow button { gap: 15px; padding-left: 16px; color: var(--faint); }
.count { height: 64px; border: 0; }
.count div { display: flex; align-items: center; justify-content: flex-end; gap: 12px; padding-right: 16px; font-size: 28px; }
.count span { font-size: 22px; color: var(--muted); }

/* Floating assistant prompt */
.ask {
  position: fixed;
  right: 52px;
  bottom: 52px;
  height: 90px;
  padding: 0 26px 0 20px;
  gap: 17px;
  border-radius: 45px;
  background: #252525;
  color: #757575;
  font-weight: 500;
  box-shadow: 0 4px 12px rgba(0, 0, 0, .25);
}
.asktext { margin-right: 10px; }
.ask b { font-weight: 600; color: #949494; }
.orb {
  position: relative;
  width: 52px;
  height: 52px;
  display: flex;
  align-items: center;
  justify-content: center;
  border: 4px solid #b5d0ee;
  border-radius: 50%;
}
.badge {
  position: absolute;
  top: -10px;
  right: -6px;
  width: 20px;
  height: 20px;
  border: 4px solid #fff;
  border-radius: 50%;
  background: var(--blue);
}
```
